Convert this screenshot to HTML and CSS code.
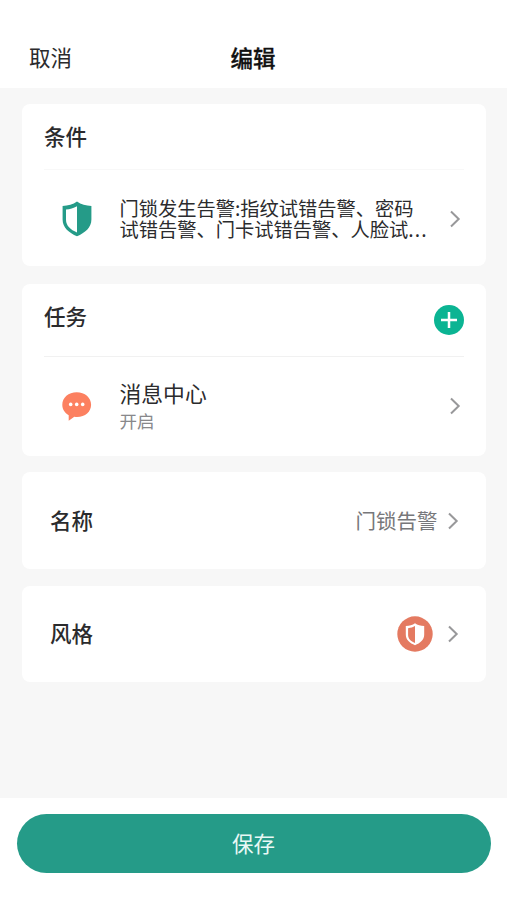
FILE: index.html
```html
<!DOCTYPE html>
<html lang="zh-CN">
<head>
<meta charset="utf-8">
<title>编辑</title>
<link rel="stylesheet" href="styles.css">
</head>
<body>
<header class="header">
  <span class="cancel">取消</span>
  <h1 class="title">编辑</h1>
  <span></span>
</header>
<main class="content">
  <section class="card condition">
    <div class="card-head"><h2 class="label">条件</h2></div>
    <div class="row">
      <svg class="row-icon" width="30" height="36" viewBox="0 0 30 36"><path fill="#259b88" d="M15 .6C11 3.500 6 4.900.6 5v13.500C.6 26.500 7 32 15 35.200c8-3.200 14.400-8.700 14.400-16.700V5C24 4.900 19 3.500 15 .6Z"/><path fill="#fff" d="M15 5.300C11.500 7.300 8 8.300 4 8.500v10.300c0 6 4.500 9.900 11 12.700Z"/></svg>
      <p class="desc">门锁发生告警:指纹试错告警、密码<br>试错告警、门卡试错告警、人脸试<span class="dots">...</span></p>
      <svg class="chevron" width="12" height="18" viewBox="0 0 12 18"><path d="m2 1.500 7.700 7.500L2 16.500"/></svg>
    </div>
  </section>
  <section class="card task">
    <div class="card-head"><h2 class="label">任务</h2>
      <svg class="add" width="30" height="30" viewBox="0 0 30 30"><circle cx="15" cy="15" r="15" fill="#0bb493"/><path d="M15 7v16M7 15h16" stroke="#fff" stroke-width="2.500"/></svg>
    </div>
    <div class="row">
      <svg class="row-icon" width="30" height="30" viewBox="0 0 30 30"><path fill="#fc8060" d="M14.700 1.200C6.500 1.200.3 6.600.3 13.800c0 4.600 2.400 8.200 6.400 10.400v5.600l5.600-4c9.600 1.300 16.800-4.200 16.800-12C29.100 6.600 22.900 1.200 14.700 1.200Z"/><g fill="#fff"><circle cx="8.700" cy="13.400" r="1.800"/><circle cx="14.700" cy="13.400" r="1.800"/><circle cx="20.700" cy="13.400" r="1.800"/></g></svg>
      <div class="message"><p class="name">消息中心</p><p class="state">开启</p></div>
      <svg class="chevron" width="12" height="18" viewBox="0 0 12 18"><path d="m2 1.500 7.700 7.500L2 16.500"/></svg>
    </div>
  </section>
  <section class="card setting">
    <h2 class="label">名称</h2>
    <span class="value">门锁告警</span>
    <svg class="chevron" width="12" height="18" viewBox="0 0 12 18"><path d="m2 1.500 7.700 7.500L2 16.500"/></svg>
  </section>
  <section class="card setting style">
    <h2 class="label">风格</h2>
    <svg class="badge" width="36" height="36" viewBox="0 0 36 36"><circle cx="18" cy="18" r="17.700" fill="#e47a61"/><path fill="#fff" d="M18 7.300C15.500 9 12.500 9.900 8.800 10v8.800c0 5 4 8.500 9.200 10.400 5.200-1.900 9.200-5.400 9.200-10.400V10C23.500 9.900 20.500 9 18 7.300Z"/><path fill="#e47a61" d="M18 10.100c-2 1.200-4 1.900-6.900 2.100V19c0 3.700 2.700 6.200 6.900 7.900Z"/></svg>
    <svg class="chevron" width="12" height="18" viewBox="0 0 12 18"><path d="m2 1.500 7.700 7.500L2 16.500"/></svg>
  </section>
</main>
<footer class="footer"><button class="save">保存</button></footer>
</body>
</html>
```
FILE: styles.css
```css
* { box-sizing: border-box; margin: 0; padding: 0; }
body {
  height: 900px;
  display: flex;
  flex-direction: column;
  overflow: hidden;
  background: #f7f7f7;
  color: #2b2b2d;
  font-family: "Noto Sans CJK SC", sans-serif;
}
svg { display: block; flex: none; }
.header {
  height: 88px;
  padding: 25px 30px 0 29px;
  display: grid;
  grid-template-columns: 1fr auto 1fr;
  align-items: center;
  background: #fff;
}
.cancel { font-size: 21.500px; line-height: 30px; }
.title { font-size: 22.500px; line-height: 30px; font-weight: 500; color: #111; -webkit-text-stroke: .3px #111; }
.content { flex: 1; padding: 16px 21.500px 0 22px; }
.card { background: #fff; border-radius: 8px; padding: 0 22px; }
.label { font-size: 21.500px; line-height: 30px; font-weight: 500; }
.card-head { display: flex; justify-content: space-between; border-bottom: 1px solid #f1f1f1; }
.condition { height: 162px; margin-bottom: 18px; }
.condition .card-head { height: 66px; padding-top: 17px; border-color: #f8f8f8; }
.task { height: 172px; margin-bottom: 16px; }
.task .card-head { height: 73px; padding-top: 17px; }
.add { margin-top: 4px; }
.row { display: flex; align-items: center; height: 98px; padding: 0 3px 0 18px; }
.row-icon { margin-right: 27.500px; }
.chevron { margin-left: auto; fill: none; stroke: #98989a; stroke-width: 2; }
.desc { font-size: 19.250px; line-height: 21px; white-space: nowrap; }
.dots { letter-spacing: 1.200px; }
.name { font-size: 21.800px; line-height: 30px; }
.state { font-size: 17.500px; line-height: 26px; color: #88888b; }
.setting { height: 97px; margin-bottom: 17px; padding: 0 27px 0 28px; display: flex; align-items: center; }
.setting .label { margin-right: auto; padding-bottom: 2px; }
.setting .chevron { margin-left: 9px; }
.value { font-size: 20.500px; line-height: 30px; padding-bottom: 2px; color: #77777a; }
.style { height: 96px; }
.style .chevron { margin-left: 14px; }
.footer { height: 102px; padding: 16px 16px 0 17px; background: #fff; }
.save {
  display: block;
  width: 100%;
  height: 59px;
  padding: 0 1px 1px 0;
  border: 0;
  border-radius: 30px;
  background: #259b88;
  color: #e9f8f5;
  font: 21.500px/30px "Noto Sans CJK SC", sans-serif;
}
```
